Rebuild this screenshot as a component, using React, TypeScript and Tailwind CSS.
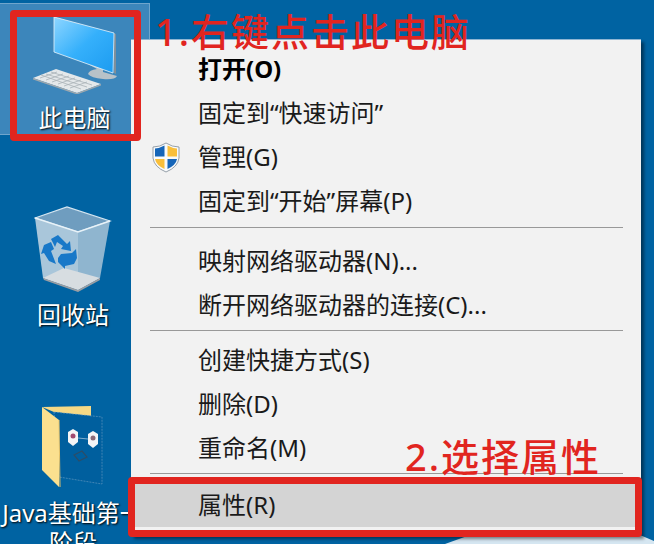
const cjk = "font-['Noto_Sans','Noto_Sans_CJK_SC',sans-serif]"

function ComputerIcon() {
  return (
    <svg width="90" height="80" viewBox="0 0 90 80">
      <defs>
        <linearGradient id="screen" x1="0" y1="0" x2="1" y2="1">
          <stop offset="0" stopColor="#8fd6ff" />
          <stop offset="0.5" stopColor="#35b0fb" />
          <stop offset="1" stopColor="#1c9bf0" />
        </linearGradient>
      </defs>
      {/* stand */}
      <path d="M57 50 L72 54 L72 58 L86 62 Q84 66 72 65 Q60 64 57 60 Q58 56 66 55 Z" fill="#b9c2c8" />
      {/* monitor */}
      <path d="M23 3 L85 20 L85 60 L83 59 L83 21 L24 5 Z" fill="#7f8f9a" />
      <path d="M23 3 L83 19 L82 59 L23 38 Z" fill="url(#screen)" />
      <path d="M23 3 L83 19 L82 59 L23 38 Z" fill="none" stroke="#e8f4fb" strokeWidth="0.8" />
      {/* keyboard */}
      <path d="M2 64 L25 55 L70 70 L46 79 Z" fill="#e4e8ea" />
      <path d="M2 64 L46 79 L70 70 L70 71.5 L46 80.5 L2 65.5 Z" fill="#9ea8ae" />
      <path d="M9 64 L26 58 M15 66 L32 60 M21 68 L38 62 M27 70 L44 64 M33 72 L50 66 M39 74 L56 68 M10 61 L50 75 M15 60 L56 73 M20 58 L61 71" stroke="#aab3b8" strokeWidth="0.8" />
    </svg>
  )
}

function BinIcon() {
  return (
    <svg width="78" height="86" viewBox="0 0 78 86">
      <path d="M1 12 L33 1 L76 15 L44 26 Z" fill="#6f9dbf" stroke="#d5e6f1" strokeWidth="1.2" />
      <path d="M1 12 L44 26 L44 84 L9 72 Z" fill="#a9c6da" />
      <path d="M44 26 L76 15 L66 72 L44 84 Z" fill="#8fb5cf" />
      <path d="M9 72 L30 62 L66 72 L44 84 Z" fill="#d7dde1" />
      <path d="M9 72 L44 84 L66 72 L66 74 L44 86 L10 74 Z" fill="#9a9ea3" />
      <path d="M1 12 L44 26 L76 15" fill="none" stroke="#e8f2f8" strokeWidth="1.4" />
      {/* recycle arrows */}
      <path d="M17 33 L24 29 L33 38 L36 35 L37 45 L27 43 L29 40 L23 36 L21 41 Z" fill="#1878c8" />
      <path d="M10 39 L17 36 L20 43 L17 45 L22 58 L15 55 L10 47 L7 48 Z" fill="#1878c8" />
      <path d="M24 52 L27 48 L38 47 L42 43 L43 52 L40 58 L31 60 L31 63 L24 56 Z" fill="#1878c8" />
    </svg>
  )
}

function FolderIcon() {
  return (
    <svg width="64" height="84" viewBox="0 0 64 84">
      <path d="M1 2 L50 1 L50 11 L13 7 Z" fill="#f6d985" />
      <path d="M13 7 L61 12 L61 79 L18 72 Z" fill="#005f9e" stroke="#6d9fc4" strokeWidth="0.6" strokeDasharray="2 1" />
      <path d="M1 2 L18 15 L18 82 L1 65 Z" fill="#fbe08f" />
      <path d="M18 15 L19 82" stroke="#e9c56c" strokeWidth="1" />
      <path d="M27 27 L32 24 L37 27 L37 37 L32 41 L27 37 Z" fill="#f4f5f6" />
      <circle cx="32" cy="31" r="2.5" fill="#a04a70" />
      <path d="M47 29 L52 26 L57 29 L57 39 L52 43 L47 39 Z" fill="#f4f5f6" />
      <circle cx="52" cy="33" r="2.5" fill="#8a6a78" />
      <path d="M37 33 L47 34" stroke="#9fc0d8" strokeWidth="0.8" />
      <path d="M33 50 L41 46 L46 52 L38 56 Z" fill="none" stroke="#2b4d68" strokeWidth="1.2" />
    </svg>
  )
}

function ShieldIcon() {
  return (
    <svg width="28" height="31" viewBox="0 0 28 31">
      <path d="M14 1 Q20 5 27 5 L27 16 Q26 25 14 30 Q2 25 1 16 L1 5 Q8 5 14 1 Z" fill="#f8fafc" stroke="#7d8a96" strokeWidth="0.8" />
      <path d="M12.5 3.5 Q8 6 3 6.5 L3 14.5 L12.5 14.5 Z" fill="#1565b8" />
      <path d="M15.5 3.5 Q20 6 25 6.5 L25 14.5 L15.5 14.5 Z" fill="#f9bf3b" />
      <path d="M3 17 L12.5 17 L12.5 27 Q4 23 3 17 Z" fill="#f9bf3b" />
      <path d="M25 17 L15.5 17 L15.5 27 Q24 23 25 17 Z" fill="#1565b8" />
    </svg>
  )
}

function DesktopLabel({ children }: { children: React.ReactNode }) {
  return (
    <p className={`text-center text-[24px] leading-[30px] text-white whitespace-nowrap [text-shadow:1px_1px_2px_#000] ${cjk}`}>
      {children}
    </p>
  )
}

const Separator = ({ className }: { className: string }) => (
  <div className={`ml-[19px] mr-[18px] h-px bg-[#999999] ${className}`} />
)

function MenuRow({ label, bold, icon, active }: { label: string; bold?: boolean; icon?: boolean; active?: boolean }) {
  return (
    <div className={`flex h-11 items-center text-[24px] ${active ? 'bg-[#d4d4d4]' : ''} ${bold ? 'font-bold text-black' : 'text-[#1a1a1a]'}`}>
      <div className="w-[67px] shrink-0 pl-[21px]">{icon && <ShieldIcon />}</div>
      <span className="whitespace-nowrap">{label}</span>
    </div>
  )
}

export default function App() {
  return (
    <div className={`relative flex h-[544px] w-[654px] overflow-hidden bg-[#0063a2] ${cjk}`}>
      {/* desktop icons */}
      <div className="mr-[-19px] w-[150px] shrink-0">
        <div className="mt-[3px] flex h-[132px] flex-col items-center border border-[#6fa5cc] border-l-0 bg-[#3c86bb] pt-[10px]">
          <div className="ml-[2px]">
            <ComputerIcon />
          </div>
          <div className="mt-[9px]">
            <DesktopLabel>此电脑</DesktopLabel>
          </div>
        </div>
        <div className="mt-[71px] flex w-[146px] flex-col items-center">
          <BinIcon />
          <div className="mt-[8px]">
            <DesktopLabel>回收站</DesktopLabel>
          </div>
        </div>
        <div className="mt-[75px] flex w-[146px] flex-col items-center">
          <FolderIcon />
          <div className="mt-[9px]">
            <DesktopLabel>Java基础第一</DesktopLabel>
            <DesktopLabel>阶段</DesktopLabel>
          </div>
        </div>
      </div>

      {/* context menu */}
      <div className="relative z-10 mt-[39px] h-[497px] w-[510px] border-t border-[#8fb6d3] bg-[#f2f2f2] pt-[7px] shadow-[3px_3px_3px_rgba(0,0,0,0.45)]">
        <MenuRow label="打开(O)" bold />
        <MenuRow label="固定到“快速访问”" />
        <MenuRow label="管理(G)" icon />
        <MenuRow label="固定到“开始”屏幕(P)" />
        <Separator className="mt-[4px] mb-[11px]" />
        <MenuRow label="映射网络驱动器(N)..." />
        <MenuRow label="断开网络驱动器的连接(C)..." />
        <Separator className="mt-[3px] mb-[7px]" />
        <MenuRow label="创建快捷方式(S)" />
        <MenuRow label="删除(D)" />
        <MenuRow label="重命名(M)" />
        <Separator className="mt-[3px] mb-[9px]" />
        <MenuRow label="属性(R)" active />
      </div>

      {/* wallpaper light at the bottom edge */}
      <svg className="absolute bottom-0 left-[440px]" width="214" height="10" viewBox="0 0 214 10">
        <path d="M5 10 L30 1 L200 1 L214 7 L214 10 Z" fill="#d5e6f1" />
      </svg>

      {/* red annotations */}
      <div className="absolute left-[10px] top-[10px] z-20 h-[131px] w-[131px] rounded-[4px] border-[7px] border-[#e1251f]" />
      <div className="absolute left-[128px] top-[477px] z-20 h-[60px] w-[514px] rounded-[4px] border-[7px] border-[#e1251f]" />
      <p className="absolute left-[155px] top-[3px] z-20 whitespace-nowrap text-[38px] font-medium leading-[56px] tracking-[2px] text-[#e1251f]">
        1.右键点击此电脑
      </p>
      <p className="absolute left-[405px] top-[428px] z-20 whitespace-nowrap text-[38px] font-medium leading-[56px] tracking-[2px] text-[#e1251f]">
        2.选择属性
      </p>
    </div>
  )
}
